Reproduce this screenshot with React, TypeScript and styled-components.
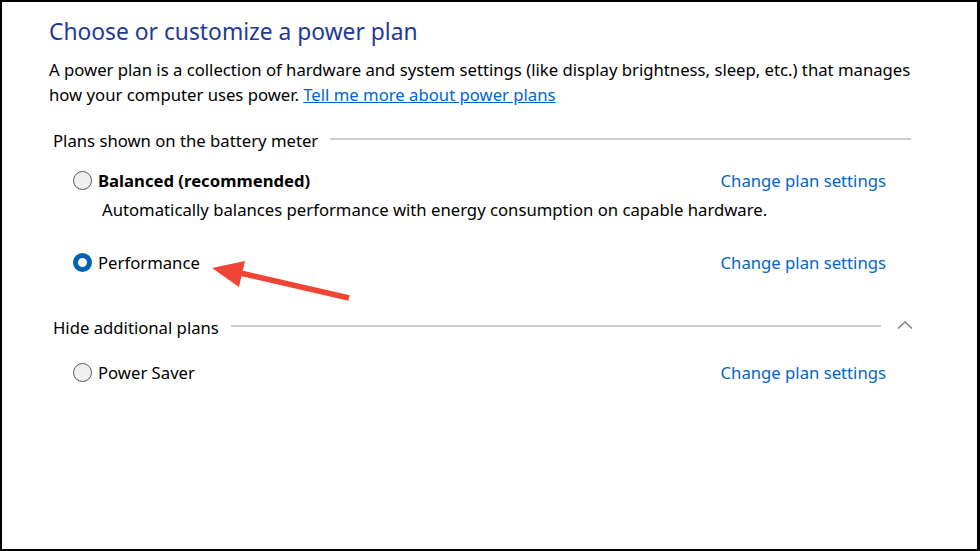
import React from 'react';
import styled, { createGlobalStyle } from 'styled-components';

const Global = createGlobalStyle`
  html, body {
    margin: 0;
    padding: 0;
    background: #fff;
  }
  * {
    box-sizing: border-box;
  }
`;

const Frame = styled.div`
  position: relative;
  width: 980px;
  height: 551px;
  border: solid 2px #000;
  border-right-width: 3px;
  background: #fff;
  font-family: 'Noto Sans', 'Open Sans', sans-serif;
  color: #000;
  padding: 14px 0 0 47px;
  overflow: hidden;
`;

const Title = styled.h1`
  margin: 0;
  font-size: 22.8px;
  font-weight: 400;
  color: #1e3a96;
  line-height: 32px;
`;

const Description = styled.p`
  margin: 9px 0 0 0;
  width: 875px;
  font-size: 16.7px;
  line-height: 25px;
`;

const Link = styled.a`
  color: #0066cc;
  text-decoration: ${(p: { $underline?: boolean }) => (p.$underline ? 'underline' : 'none')};
  cursor: pointer;
`;

const Section = styled.div`
  width: 858px;
  margin-left: 4px;
  font-size: 16.7px;
`;

const SectionHeader = styled.div<{ $top: number }>`
  display: flex;
  align-items: center;
  gap: 12px;
  margin-top: ${(p) => p.$top}px;
  height: 26px;
`;

const Rule = styled.div`
  flex: 1;
  height: 2px;
  background: #cdcdcd;
  margin-top: -3px;
`;

const Chevron = styled.svg`
  width: 18px;
  height: 12px;
  margin: -5px -3px 0 3px;
  flex: none;
`;

const PlanRow = styled.div<{ $top: number }>`
  display: grid;
  grid-template-columns: 1fr auto;
  align-items: center;
  margin-top: ${(p) => p.$top}px;
  padding: 0 25px 0 20px;
  height: 26px;
`;

const Choice = styled.label`
  display: flex;
  align-items: center;
  gap: 6px;
`;

const Radio = styled.span<{ $checked?: boolean }>`
  width: 19px;
  height: 19px;
  border-radius: 50%;
  flex: none;
  border: ${(p) => (p.$checked ? '5px solid #0063b1' : '1px solid #5a5a5a')};
  background: ${(p) => (p.$checked ? '#fff' : '#f0f0f0')};
`;

const PlanName = styled.span<{ $bold?: boolean }>`
  font-weight: ${(p) => (p.$bold ? 700 : 400)};
`;

const PlanNote = styled.div`
  margin: 4px 0 0 49px;
  line-height: 26px;
`;

const Arrow = styled.svg`
  position: absolute;
  left: 200px;
  top: 245px;
  width: 160px;
  height: 60px;
`;

type Plan = { name: string; checked?: boolean; bold?: boolean; note?: string; top: number };

const shown: Plan[] = [
  {
    name: 'Balanced (recommended)',
    bold: true,
    top: 14,
    note: 'Automatically balances performance with energy consumption on capable hardware.',
  },
  { name: 'Performance', checked: true, top: 26 },
];

const PlanItem: React.FC<{ plan: Plan }> = ({ plan }) => (
  <>
    <PlanRow $top={plan.top}>
      <Choice>
        <Radio $checked={plan.checked} />
        <PlanName $bold={plan.bold}>{plan.name}</PlanName>
      </Choice>
      <Link>Change plan settings</Link>
    </PlanRow>
    {plan.note && <PlanNote>{plan.note}</PlanNote>}
  </>
);

const App: React.FC = () => {
  return (
    <Frame>
      <Global />
      <Title>Choose or customize a power plan</Title>
      <Description>
        A power plan is a collection of hardware and system settings (like display brightness, sleep, etc.) that
        manages how your computer uses power. <Link $underline>Tell me more about power plans</Link>
      </Description>
      <Section>
        <SectionHeader $top={20}>
          <span>Plans shown on the battery meter</span>
          <Rule />
        </SectionHeader>
        {shown.map((p) => (
          <PlanItem key={p.name} plan={p} />
        ))}
        <SectionHeader $top={39}>
          <span>Hide additional plans</span>
          <Rule />
          <Chevron viewBox="0 0 18 12">
            <path d="M2 9.5 L9 3 L16 9.5" fill="none" stroke="#7a7a7a" strokeWidth="1.4" />
          </Chevron>
        </SectionHeader>
        <PlanItem plan={{ name: 'Power Saver', top: 19 }} />
      </Section>
      <Arrow viewBox="0 0 160 60">
        <line x1="147" y1="51" x2="34" y2="25" stroke="#f04435" strokeWidth="5.5" />
        <polygon points="10,21 43,14 37,40" fill="#f04435" />
      </Arrow>
    </Frame>
  );
};

export default App;
